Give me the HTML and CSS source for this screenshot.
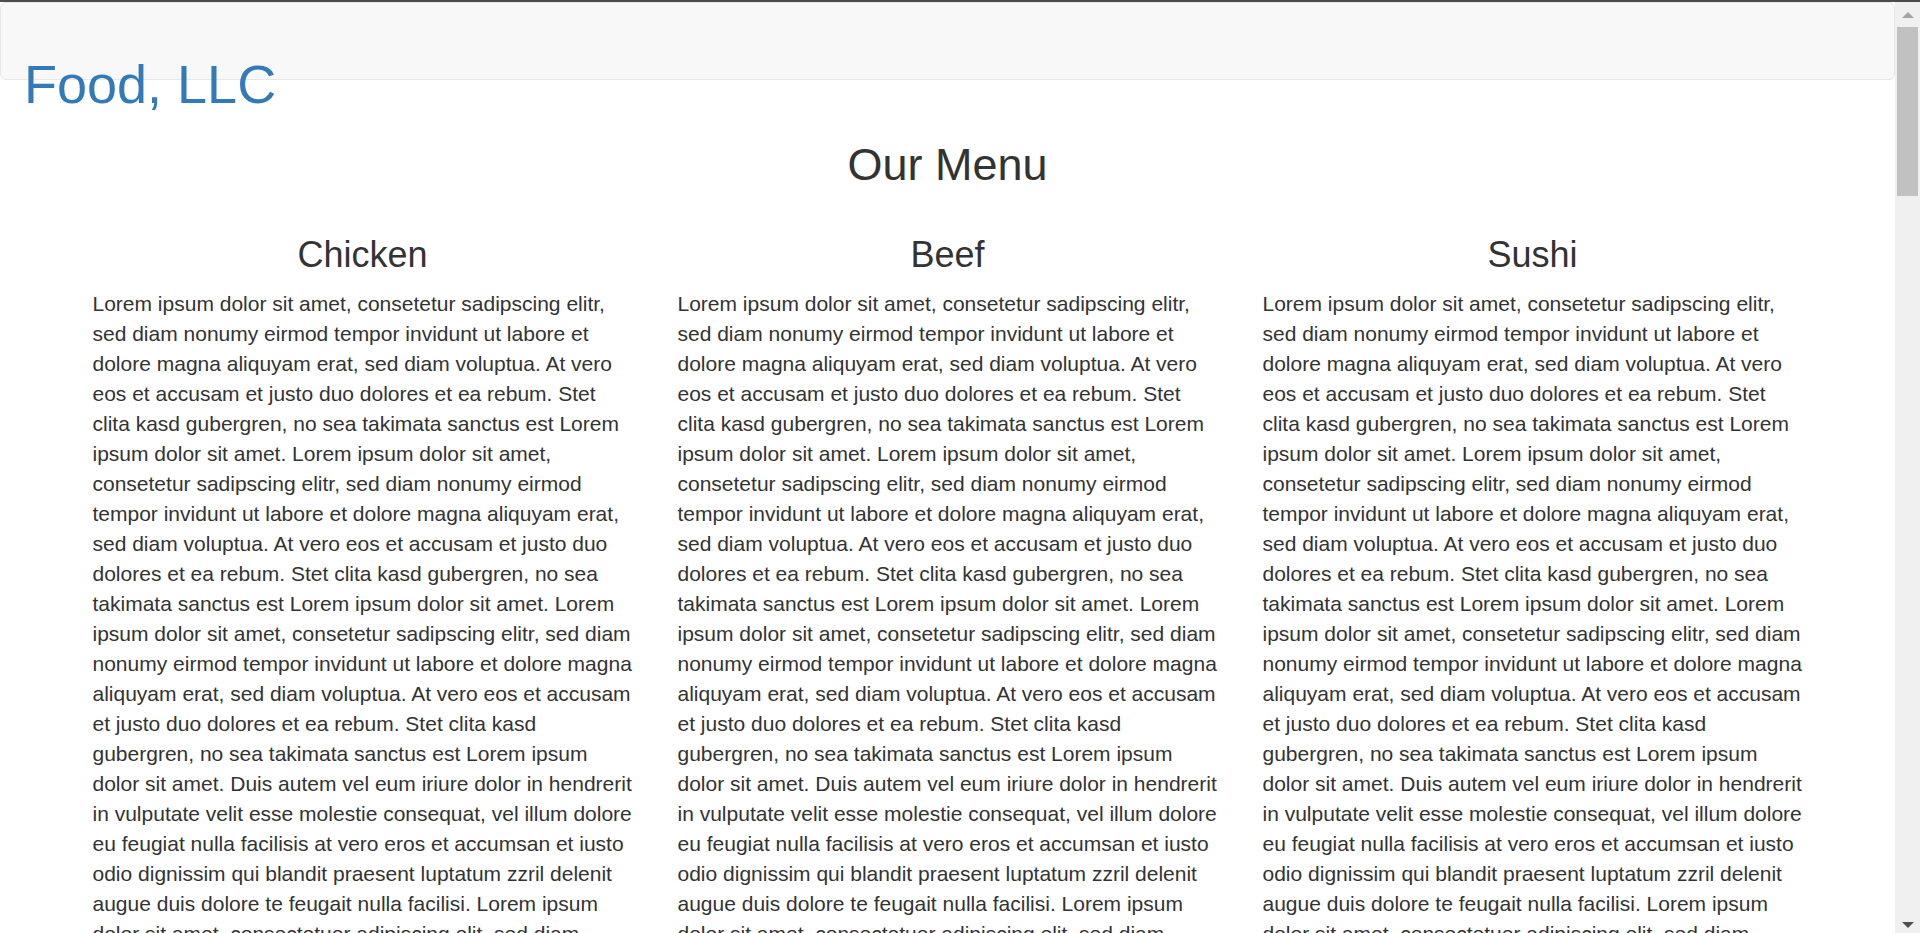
FILE: index.html
```html
<!DOCTYPE html>
<html lang="en">
<head>
<meta charset="utf-8">
<title>Food, LLC</title>
<link rel="stylesheet" href="styles.css">
</head>
<body>
<div class="topline"></div>
<div class="window">
  <div class="page">
    <header class="navbar">
      <h1 class="brand">Food, LLC</h1>
    </header>
    <main class="container">
      <h2 class="menu-title">Our Menu</h2>
      <div class="row">
        <section class="col">
          <h3 class="col-title">Chicken</h3>
          <p class="col-text">Lorem ipsum dolor sit amet, consetetur sadipscing elitr, sed diam nonumy eirmod tempor invidunt ut labore et dolore magna aliquyam erat, sed diam voluptua. At vero eos et accusam et justo duo dolores et ea rebum. Stet clita kasd gubergren, no sea takimata sanctus est Lorem ipsum dolor sit amet. Lorem ipsum dolor sit amet, consetetur sadipscing elitr, sed diam nonumy eirmod tempor invidunt ut labore et dolore magna aliquyam erat, sed diam voluptua. At vero eos et accusam et justo duo dolores et ea rebum. Stet clita kasd gubergren, no sea takimata sanctus est Lorem ipsum dolor sit amet. Lorem ipsum dolor sit amet, consetetur sadipscing elitr, sed diam nonumy eirmod tempor invidunt ut labore et dolore magna aliquyam erat, sed diam voluptua. At vero eos et accusam et justo duo dolores et ea rebum. Stet clita kasd gubergren, no sea takimata sanctus est Lorem ipsum dolor sit amet. Duis autem vel eum iriure dolor in hendrerit in vulputate velit esse molestie consequat, vel illum dolore eu feugiat nulla facilisis at vero eros et accumsan et iusto odio dignissim qui blandit praesent luptatum zzril delenit augue duis dolore te feugait nulla facilisi. Lorem ipsum dolor sit amet, consectetuer adipiscing elit, sed diam nonummy nibh euismod tincidunt ut laoreet dolore magna aliquam erat volutpat.</p>
        </section>
        <section class="col">
          <h3 class="col-title">Beef</h3>
          <p class="col-text">Lorem ipsum dolor sit amet, consetetur sadipscing elitr, sed diam nonumy eirmod tempor invidunt ut labore et dolore magna aliquyam erat, sed diam voluptua. At vero eos et accusam et justo duo dolores et ea rebum. Stet clita kasd gubergren, no sea takimata sanctus est Lorem ipsum dolor sit amet. Lorem ipsum dolor sit amet, consetetur sadipscing elitr, sed diam nonumy eirmod tempor invidunt ut labore et dolore magna aliquyam erat, sed diam voluptua. At vero eos et accusam et justo duo dolores et ea rebum. Stet clita kasd gubergren, no sea takimata sanctus est Lorem ipsum dolor sit amet. Lorem ipsum dolor sit amet, consetetur sadipscing elitr, sed diam nonumy eirmod tempor invidunt ut labore et dolore magna aliquyam erat, sed diam voluptua. At vero eos et accusam et justo duo dolores et ea rebum. Stet clita kasd gubergren, no sea takimata sanctus est Lorem ipsum dolor sit amet. Duis autem vel eum iriure dolor in hendrerit in vulputate velit esse molestie consequat, vel illum dolore eu feugiat nulla facilisis at vero eros et accumsan et iusto odio dignissim qui blandit praesent luptatum zzril delenit augue duis dolore te feugait nulla facilisi. Lorem ipsum dolor sit amet, consectetuer adipiscing elit, sed diam nonummy nibh euismod tincidunt ut laoreet dolore magna aliquam erat volutpat.</p>
        </section>
        <section class="col">
          <h3 class="col-title">Sushi</h3>
          <p class="col-text">Lorem ipsum dolor sit amet, consetetur sadipscing elitr, sed diam nonumy eirmod tempor invidunt ut labore et dolore magna aliquyam erat, sed diam voluptua. At vero eos et accusam et justo duo dolores et ea rebum. Stet clita kasd gubergren, no sea takimata sanctus est Lorem ipsum dolor sit amet. Lorem ipsum dolor sit amet, consetetur sadipscing elitr, sed diam nonumy eirmod tempor invidunt ut labore et dolore magna aliquyam erat, sed diam voluptua. At vero eos et accusam et justo duo dolores et ea rebum. Stet clita kasd gubergren, no sea takimata sanctus est Lorem ipsum dolor sit amet. Lorem ipsum dolor sit amet, consetetur sadipscing elitr, sed diam nonumy eirmod tempor invidunt ut labore et dolore magna aliquyam erat, sed diam voluptua. At vero eos et accusam et justo duo dolores et ea rebum. Stet clita kasd gubergren, no sea takimata sanctus est Lorem ipsum dolor sit amet. Duis autem vel eum iriure dolor in hendrerit in vulputate velit esse molestie consequat, vel illum dolore eu feugiat nulla facilisis at vero eros et accumsan et iusto odio dignissim qui blandit praesent luptatum zzril delenit augue duis dolore te feugait nulla facilisi. Lorem ipsum dolor sit amet, consectetuer adipiscing elit, sed diam nonummy nibh euismod tincidunt ut laoreet dolore magna aliquam erat volutpat.</p>
        </section>
      </div>
    </main>
  </div>
  <div class="scrollbar">
    <div class="sb-btn sb-up">
      <svg width="12" height="6" viewBox="0 0 12 6"><polygon points="0,6 12,6 6,0" fill="#a3a3a3"/></svg>
    </div>
    <div class="sb-thumb"></div>
    <div class="sb-track"></div>
    <div class="sb-btn sb-down">
      <svg width="12" height="6" viewBox="0 0 12 6"><polygon points="0,0 12,0 6,6" fill="#505050"/></svg>
    </div>
  </div>
</div>
</body>
</html>
```

FILE: styles.css
```css
html, body {
  margin: 0;
  padding: 0;
  height: 100%;
  overflow: hidden;
}

body {
  display: flex;
  flex-direction: column;
  background: #ffffff;
  color: #333333;
  font-family: "Liberation Sans", Arial, Helvetica, sans-serif;
  font-size: 21px;
  line-height: 30px;
}

.topline {
  height: 2px;
  flex: 0 0 2px;
  background: #4b4b4b;
}

.window {
  flex: 1 1 auto;
  display: flex;
  min-height: 0;
}

.page {
  flex: 1 1 auto;
  min-width: 0;
  overflow: hidden;
  display: flex;
  flex-direction: column;
}

.navbar {
  flex: 0 0 auto;
  background: #f8f8f8;
  border: 1px solid #e7e7e7;
  border-radius: 6px;
  margin-bottom: 30px;
  padding: 22px 0 0 23px;
  box-sizing: content-box;
  height: 54px;
  overflow: visible;
  position: relative;
  z-index: 1;
}

.brand {
  margin: 30px 0 0 0;
  font-size: 54px;
  line-height: 1.1;
  font-weight: 400;
  color: #337ab7;
  white-space: nowrap;
}

.container {
  width: 1755px;
  margin: 0 auto;
  display: flex;
  flex-direction: column;
}

.menu-title {
  margin: 30px 0 15px;
  font-size: 45px;
  line-height: 1.1;
  font-weight: 400;
  text-align: center;
}

.row {
  display: grid;
  grid-template-columns: repeat(3, 585px);
}

.col {
  padding: 0 22.5px;
  display: flex;
  flex-direction: column;
}

.col-title {
  margin: 30px 0 15px;
  font-size: 36px;
  line-height: 1.1;
  font-weight: 400;
  text-align: center;
}

.col-text {
  margin: 0 0 15px;
}

.scrollbar {
  flex: 0 0 25px;
  width: 25px;
  background: #f0f0f0;
  display: flex;
  flex-direction: column;
  align-items: center;
}

.sb-btn {
  display: flex;
  justify-content: center;
  width: 25px;
}

.sb-up {
  height: 25px;
  padding-top: 10px;
  box-sizing: border-box;
}

.sb-thumb {
  width: 21px;
  height: 169px;
  background: #c1c1c1;
}

.sb-track {
  flex: 1 1 auto;
}

.sb-down {
  height: 25px;
  padding-top: 14px;
  box-sizing: border-box;
}

.sb-btn svg {
  display: block;
}
```
